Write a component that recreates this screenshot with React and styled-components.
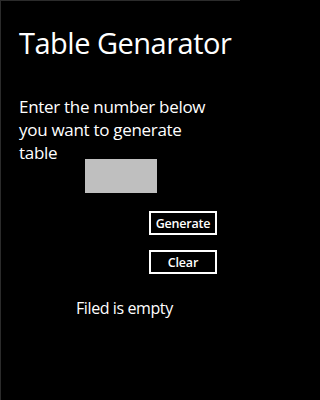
import styled, { createGlobalStyle } from "styled-components";

const GlobalStyle = createGlobalStyle`
  html, body {
    margin: 0;
    padding: 0;
    background: #000;
  }
  body {
    font-family: "Open Sans", "Noto Sans", sans-serif;
    color: #fff;
  }
`;

const Screen = styled.div`
  width: 240px;
  height: 400px;
  box-sizing: border-box;
  background: #000;
  border-left: 1px solid #2b2b2b;
  border-top: 1px solid #2b2b2b;
  padding: 22px 0 0 18px;
  display: flex;
  flex-direction: column;
`;

const Title = styled.h1`
  margin: 0;
  font-size: 29px;
  font-weight: 400;
  line-height: 40px;
  letter-spacing: -0.5px;
  white-space: nowrap;
`;

const Prompt = styled.p`
  margin: 32px 0 0;
  width: 196px;
  font-size: 17px;
  line-height: 23px;
  letter-spacing: -0.3px;
`;

const NumberBox = styled.input`
  align-self: flex-start;
  margin: -5px 0 0 66px;
  width: 72px;
  height: 34px;
  box-sizing: border-box;
  border: none;
  background: #bfbfbf;
  outline: none;
`;

const Actions = styled.div`
  display: flex;
  flex-direction: column;
  align-items: flex-start;
  gap: 15px;
  margin: 18px 0 0 130px;
`;

const OutlineButton = styled.button`
  width: 68px;
  height: 24px;
  box-sizing: border-box;
  border: 2px solid #fff;
  background: transparent;
  color: #fff;
  font-family: "Open Sans", sans-serif;
  font-size: 12.5px;
  font-weight: 600;
  letter-spacing: -0.2px;
  padding: 0;
  cursor: pointer;
`;

const Status = styled.div`
  margin: 23px 0 0 57px;
  font-size: 16px;
  line-height: 22px;
  letter-spacing: -0.4px;
`;

export default function App() {
  return (
    <>
      <GlobalStyle />
      <Screen>
        <Title>Table Genarator</Title>
        <Prompt>Enter the number below you want to generate table</Prompt>
        <NumberBox type="text" />
        <Actions>
          <OutlineButton>Generate</OutlineButton>
          <OutlineButton>Clear</OutlineButton>
        </Actions>
        <Status>Filed is empty</Status>
      </Screen>
    </>
  );
}
